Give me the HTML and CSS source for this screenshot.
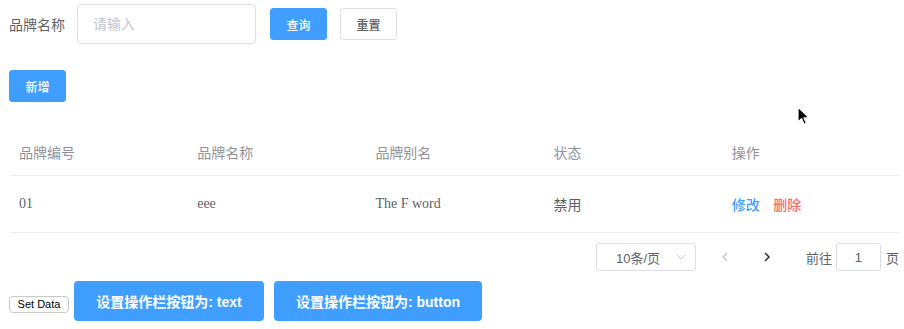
FILE: index.html
```html
<!DOCTYPE html>
<html lang="en">
<head>
    <meta charset="UTF-8">
    <title>品牌管理</title>
    <link rel="stylesheet" href="styles.css">
</head>
<body>
    <div class="page">
        <div class="search-bar">
            <label class="search-label" for="brandName">品牌名称</label>
            <input class="search-input" id="brandName" type="text" placeholder="请输入">
            <button class="btn btn-primary">查询</button>
            <button class="btn btn-default">重置</button>
        </div>

        <div class="toolbar">
            <button class="btn btn-primary">新增</button>
        </div>

        <table class="brand-table">
            <thead>
                <tr>
                    <th>品牌编号</th>
                    <th>品牌名称</th>
                    <th>品牌别名</th>
                    <th>状态</th>
                    <th>操作</th>
                </tr>
            </thead>
            <tbody>
                <tr>
                    <td>01</td>
                    <td>eee</td>
                    <td>The F word</td>
                    <td class="cell-status">禁用</td>
                    <td>
                        <a class="link link-edit">修改</a>
                        <a class="link link-delete">删除</a>
                    </td>
                </tr>
            </tbody>
        </table>

        <div class="pager">
            <div class="pager-size">
                <span>10条/页</span>
                <svg class="pager-caret" width="10" height="6" viewBox="0 0 10 6"><path d="M1 1l4 4 4-4" fill="none" stroke="#c0c4cc" stroke-width="1"/></svg>
            </div>
            <span class="pager-arrow pager-prev">
                <svg width="8" height="10" viewBox="0 0 8 10"><path d="M6 1L2 5l4 4" fill="none" stroke="#c0c4cc" stroke-width="1.2"/></svg>
            </span>
            <span class="pager-arrow pager-next">
                <svg width="8" height="10" viewBox="0 0 8 10"><path d="M2 1l4 4-4 4" fill="none" stroke="#303133" stroke-width="1.5"/></svg>
            </span>
            <span class="pager-jump">前往</span>
            <input class="pager-input" type="text" value="1">
            <span class="pager-unit">页</span>
        </div>

        <div class="actions">
            <button class="native-btn">Set Data</button>
            <button class="btn-large btn-text">设置操作栏按钮为: text</button>
            <button class="btn-large btn-button">设置操作栏按钮为: button</button>
        </div>
    </div>

    <svg class="cursor" width="14" height="20" viewBox="0 0 14 20">
        <path d="M1 1v15l3.6-3.4 2.4 5.6 2.4-1-2.4-5.4H12z" fill="#000" stroke="#fff" stroke-width="1.2" stroke-linejoin="round"/>
    </svg>
</body>
</html>
```

FILE: styles.css
```css
body {
    margin: 0;
    background-color: #fff;
    font-family: "Liberation Sans", "Noto Sans CJK SC", sans-serif;
    color: #606266;
}
.page {
    padding: 4px 4px 0 9px;
}
.search-bar {
    display: flex;
    align-items: center;
    height: 40px;
}
.search-label {
    font-size: 14px;
    color: #606266;
    margin-right: 12px;
}
.search-input {
    width: 179px;
    height: 40px;
    box-sizing: border-box;
    padding: 0 15px;
    border: 1px solid #dcdfe6;
    border-radius: 4px;
    font-size: 14px;
    font-family: inherit;
    outline: none;
    margin-right: 14px;
}
.search-input::placeholder {
    color: #c0c4cc;
}
.btn {
    height: 32px;
    width: 57px;
    padding: 0;
    border-radius: 3px;
    font-size: 12px;
    font-family: inherit;
    font-weight: 500;
    cursor: pointer;
}
.btn-primary {
    background-color: #409eff;
    border: 1px solid #409eff;
    color: #fff;
}
.btn-default {
    background-color: #fff;
    border: 1px solid #dcdfe6;
    color: #606266;
    margin-left: 13px;
}
.toolbar {
    margin-top: 26px;
    height: 32px;
}
.brand-table {
    margin-top: 26px;
    width: 891px;
    border-collapse: collapse;
    table-layout: fixed;
    font-family: "Liberation Serif", "Noto Sans CJK SC", serif;
    font-size: 14px;
}
.brand-table th {
    height: 47px;
    padding: 0 10px;
    text-align: left;
    font-weight: normal;
    color: #909399;
    font-family: "Noto Sans CJK SC", serif;
    border-bottom: 1px solid #ebeef5;
}
.brand-table td {
    height: 56px;
    padding: 0 10px;
    color: #606266;
    border-bottom: 1px solid #ebeef5;
}
.cell-status {
    font-family: "Noto Sans CJK SC", serif;
}
.link {
    font-family: "Noto Sans CJK SC", sans-serif;
    font-weight: 500;
    cursor: pointer;
}
.link-edit {
    color: #409eff;
    margin-right: 10px;
}
.link-delete {
    color: #f56c6c;
}
.pager {
    display: flex;
    justify-content: flex-end;
    align-items: center;
    margin-top: 10px;
    height: 28px;
    font-size: 13px;
    color: #606266;
    padding-right: 1px;
}
.pager-size {
    width: 100px;
    height: 28px;
    box-sizing: border-box;
    border: 1px solid #dcdfe6;
    border-radius: 3px;
    display: flex;
    align-items: center;
    padding: 0 9px 0 19px;
    justify-content: space-between;
}
.pager-arrow {
    width: 30px;
    display: flex;
    justify-content: center;
}
.pager-prev {
    margin-left: 14px;
}
.pager-next {
    margin-left: 12px;
}
.pager-jump {
    margin-left: 24px;
}
.pager-input {
    width: 45px;
    height: 28px;
    box-sizing: border-box;
    margin: 0 5px 0 4px;
    border: 1px solid #dcdfe6;
    border-radius: 3px;
    text-align: center;
    font-size: 13px;
    font-family: inherit;
    color: #606266;
    outline: none;
}
.actions {
    display: flex;
    align-items: center;
    margin-top: 10px;
}
.native-btn {
    height: 17px;
    width: 60px;
    padding: 0;
    background: #fff;
    border: 1px solid #c8c8c8;
    border-radius: 4px;
    font-size: 11px;
    font-family: "Liberation Sans", sans-serif;
    color: #000;
    margin-top: 6px;
}
.btn-large {
    height: 40px;
    padding: 0;
    margin-left: 5px;
    background-color: #409eff;
    border: none;
    border-radius: 4px;
    color: #fff;
    font-size: 14px;
    font-weight: 600;
    font-family: "Liberation Sans", "Noto Sans CJK SC", sans-serif;
}
.btn-text {
    width: 190px;
}
.btn-button {
    width: 208px;
    margin-left: 10px;
}
.cursor {
    position: absolute;
    left: 797px;
    top: 106px;
}
```
